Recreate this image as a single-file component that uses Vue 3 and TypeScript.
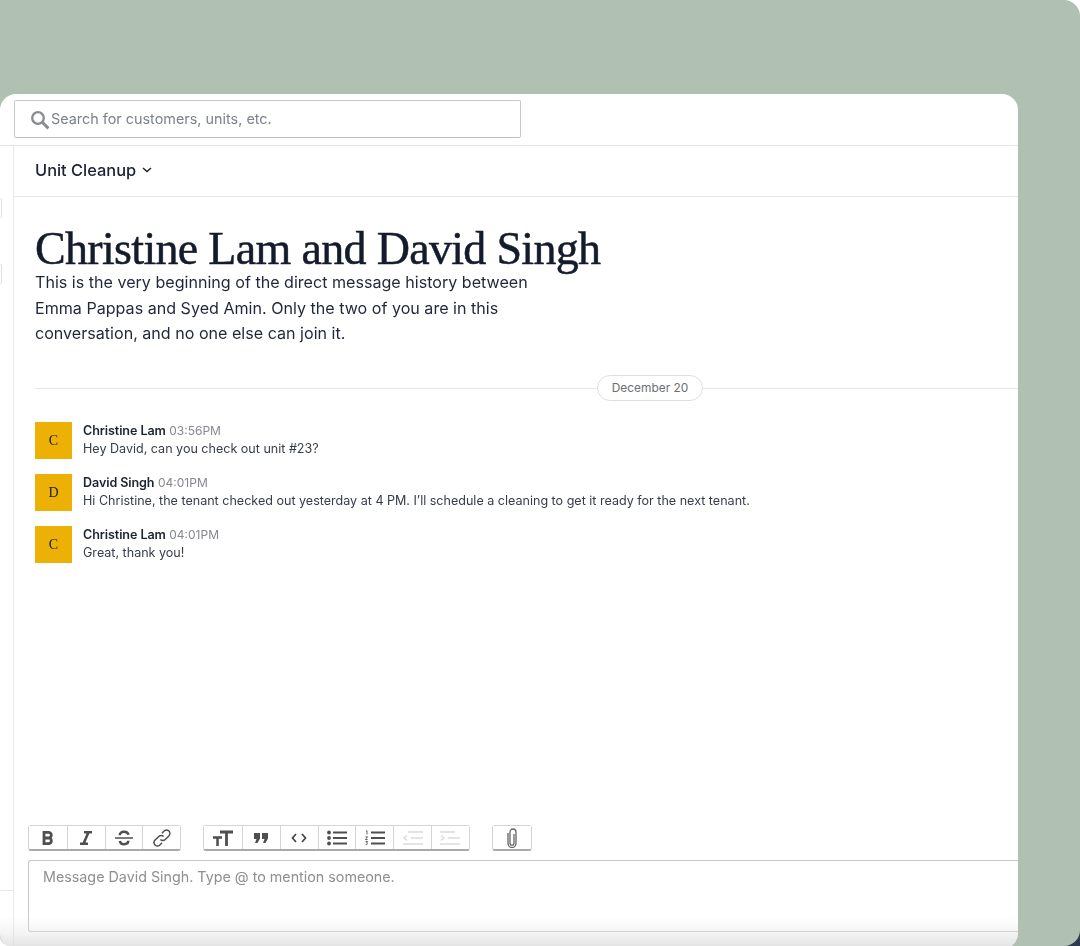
<script setup lang="ts">
interface Msg { initial: string; name: string; time: string; text: string }

const messages: Msg[] = [
  { initial: 'C', name: 'Christine Lam', time: '03:56PM', text: 'Hey David, can you check out unit #23?' },
  { initial: 'D', name: 'David Singh', time: '04:01PM', text: 'Hi Christine, the tenant checked out yesterday at 4 PM. I’ll schedule a cleaning to get it ready for the next tenant.' },
  { initial: 'C', name: 'Christine Lam', time: '04:01PM', text: 'Great, thank you!' },
]
</script>

<template>
  <div class="page">
    <div class="window">
      <div class="search-bar">
        <div class="search-box">
          <svg class="search-icon" width="20" height="20" viewBox="0 0 20 20" fill="none" stroke="#8a8b8e" stroke-width="2.3">
            <circle cx="8" cy="8" r="5.8" />
            <path d="M12.3 12.3 18.4 18.4" stroke-width="3" />
          </svg>
          <span>Search for customers, units, etc.</span>
        </div>
      </div>
      <div class="body">
        <aside class="rail">
          <i class="tick t1"></i>
          <i class="tick t2"></i>
          <i class="rail-line"></i>
        </aside>
        <main class="main">
          <div class="channel">
            <span>Unit Cleanup</span>
            <svg width="10" height="6" viewBox="0 0 10 6" fill="none" stroke="#1a2233" stroke-width="1.4"><path d="M1 1l4 3.6L9 1" /></svg>
          </div>
          <div class="intro">
            <h1>Christine Lam and David Singh</h1>
            <p>This is the very beginning of the direct message history between<br>Emma Pappas and Syed Amin. Only the two of you are in this<br>conversation, and no one else can join it.</p>
          </div>
          <div class="divider"><span>December 20</span></div>
          <div class="messages">
            <div v-for="(m, i) in messages" :key="i" class="msg">
              <div class="avatar">{{ m.initial }}</div>
              <div class="msg-body">
                <div class="meta"><b>{{ m.name }}</b> <span>{{ m.time }}</span></div>
                <div class="text">{{ m.text }}</div>
              </div>
            </div>
          </div>
          <div class="composer">
            <div class="toolbar">
              <div class="group">
                <button><svg width="16" height="16" viewBox="0 0 16 16" fill="none" stroke="#4f4f4f" stroke-width="2.8"><path d="M4 2.400h4.500a2.800 2.800 0 0 1 0 5.600H4zM4 8h5.200a2.900 2.900 0 0 1 0 5.600H4zM4 1v14" /></svg></button>
                <button><svg width="16" height="16" viewBox="0 0 16 16" fill="none" stroke="#4f4f4f" stroke-width="2.600"><path d="M6 2.300h8M2 13.700h8M10.500 2.300 5.500 13.700" /></svg></button>
                <button><svg width="18" height="16" viewBox="0 0 18 16" fill="none" stroke="#4f4f4f"><path d="M0 8h18" stroke-width="1.500" /><path d="M13.500 4.800C13 2.800 11 1.800 9 1.800 6.500 1.800 4.800 3 4.800 5.200M4.800 11C5.200 13.200 7 14.200 9 14.200c2.500 0 4.300-1.200 4.300-3.400" stroke-width="2.500" /></svg></button>
                <button><svg width="20" height="20" viewBox="0 0 18 18" fill="none" stroke="#4f4f4f" stroke-width="1.300"><path d="M7.600 10.400a3 3 0 0 0 4.300 0l3.300-3.300a3 3 0 0 0-4.300-4.300L9 4.700" /><path d="M10.400 7.600a3 3 0 0 0-4.300 0l-3.300 3.300a3 3 0 0 0 4.300 4.300L9 13.300" /></svg></button>
              </div>
              <div class="group">
                <button><svg width="20" height="16" viewBox="0 0 20 16" fill="none" stroke="#4f4f4f"><path d="M7 2h13M13.500 2v14" stroke-width="2.800" /><path d="M0 7.500h9M4.500 7.500V16" stroke-width="2.500" /></svg></button>
                <button><svg width="16" height="12" viewBox="0 0 16 12" fill="#4f4f4f"><path d="M1 1h6v5.500L4.500 11H2l1.500-4H1zM9 1h6v5.500L12.500 11H10l1.500-4H9z" /></svg></button>
                <button><svg width="16" height="10" viewBox="0 0 16 10" fill="none" stroke="#444" stroke-width="1.700"><path d="M5 1 1.500 5 5 9M11 1l3.500 4L11 9" /></svg></button>
                <button><svg width="20" height="16" viewBox="0 0 20 16" fill="#4f4f4f"><circle cx="2" cy="2.500" r="1.900" /><circle cx="2" cy="8" r="1.900" /><circle cx="2" cy="13.500" r="1.900" /><path d="M6 1.500h14v2H6zM6 7h14v2H6zM6 12.500h14v2H6z" /></svg></button>
                <button><svg width="20" height="16" viewBox="0 0 20 16" fill="none" stroke="#4f4f4f"><path d="M6 2.500h14M6 8h14M6 13.500h14" stroke-width="2" /><path d="M1 1.200 2 .8v3.600M.5 6.800h2l-2 2.800h2.200M.6 11.500h2l-1 1.500c1.200 0 1.400 2-1 1.700" stroke-width=".9" /></svg></button>
                <button><svg width="20" height="14" viewBox="0 0 20 14" fill="none" stroke="#dcdcdc" stroke-width="1.500"><path d="M5 1h15M8 7h12M0 13h20M4 4.500 1 7l3 2.500" /></svg></button>
                <button><svg width="20" height="14" viewBox="0 0 20 14" fill="none" stroke="#dcdcdc" stroke-width="1.500"><path d="M0 1h15M0 13h20M8 7h12M1 4.500 4 7 1 9.500" /></svg></button>
              </div>
              <div class="group">
                <button><svg width="12" height="20" viewBox="0 0 12 20" fill="none" stroke="#666" stroke-width="1.300"><path d="M8 6v9.200a2 2 0 0 1-4 0V4a3 3 0 0 1 6 0" /><path d="M10 4v11.500a4 4 0 0 1-8 0V5" /></svg></button>
              </div>
            </div>
            <div class="input">Message David Singh. Type @ to mention someone.</div>
          </div>
          <div class="fade"></div>
        </main>
      </div>
    </div>
    <i class="corner"></i>
  </div>
</template>

<style>
html { background: #fff; }
body { margin: 0; }
</style>

<style scoped>
.page {
  width: 1080px;
  height: 946px;
  box-sizing: border-box;
  padding-top: 94px;
  background: #b0c1b3;
  border-radius: 0 16px 16px 10px;
  overflow: hidden;
  font-family: "Inter", "Liberation Sans", sans-serif;
  color: #1a2233;
}
.corner {
  position: fixed;
  left: 1064px;
  top: 930px;
  width: 16px;
  height: 16px;
  background: #2d3a4f;
  z-index: -1;
}
.window {
  width: 1018px;
  height: 855px;
  background: #fff;
  border-radius: 16px;
  display: flex;
  flex-direction: column;
  overflow: hidden;
}
.search-bar {
  height: 52px;
  flex: none;
  box-sizing: border-box;
  padding: 6px 0 0 14px;
  border-bottom: 1px solid #e6e6e6;
}
.search-box {
  width: 507px;
  height: 38px;
  box-sizing: border-box;
  border: 1px solid #c8c8c8;
  border-bottom-color: #bdbdbd;
  border-radius: 2px;
  display: flex;
  align-items: center;
  padding: 0 0 2px 15px;
  gap: 1px;
  font-size: 14.400px;
  color: #7c818b;
}
.search-icon { flex: none; margin-top: 3px; }
.body { flex: 1; display: flex; min-height: 0; }
.rail {
  width: 13px;
  flex: none;
  border-right: 1px solid #e9e9e9;
  position: relative;
}
.tick {
  position: absolute;
  left: 0;
  width: 1px;
  height: 18px;
  border: 1px solid #e2e2e2;
  border-left: none;
  border-radius: 0 2px 2px 0;
}
.t1 { top: 52px; }
.t2 { top: 118px; }
.rail-line {
  position: absolute;
  left: 0;
  right: 0;
  top: 744px;
  height: 1px;
  background: #e9e9e9;
}
.main {
  flex: 1;
  min-width: 0;
  display: flex;
  flex-direction: column;
  position: relative;
}
.channel {
  height: 51px;
  flex: none;
  box-sizing: border-box;
  border-bottom: 1px solid #e9e9e9;
  padding: 0 0 2px 21px;
  display: flex;
  align-items: center;
  gap: 6px;
  font-size: 16.400px;
  font-weight: 500;
}
.intro { padding: 30px 0 0 21px; }
h1 {
  margin: 0 0 -1px;
  font-family: "Liberation Serif", serif;
  font-weight: 400;
  font-size: 46px;
  line-height: 44px;
  letter-spacing: -0.68px;
  -webkit-text-stroke: 0.5px #141c2c;
  color: #141c2c;
}
.intro p {
  margin: 0;
  font-size: 16.100px;
  line-height: 25.500px;
  color: #1f2738;
}
.divider {
  margin: 28px 0 0 21px;
  height: 26px;
  position: relative;
  display: flex;
  align-items: center;
  justify-content: center;
}
.divider::before {
  content: "";
  position: absolute;
  left: 0;
  right: 0;
  top: 13px;
  height: 1px;
  background: #e6e6e6;
}
.divider span {
  position: relative;
  width: 106px;
  height: 26px;
  margin-left: 247px;
  box-sizing: border-box;
  border: 1px solid #dedede;
  border-radius: 13px;
  background: #fff;
  font-size: 11.900px;
  line-height: 24px;
  text-align: center;
  color: #6c6f75;
}
.messages {
  padding: 21px 0 0 21px;
  display: flex;
  flex-direction: column;
  gap: 15px;
}
.msg { display: flex; gap: 11px; height: 37px; }
.avatar {
  width: 37px;
  height: 37px;
  flex: none;
  background: #edb105;
  font-family: "Liberation Serif", serif;
  font-size: 14px;
  line-height: 37px;
  text-align: center;
  color: #222;
}
.msg-body {
  font-size: 12.550px;
  line-height: 18px;
  color: #363c4a;
}
.meta b { font-weight: 600; letter-spacing: -0.08px; color: #1a2233; }
.meta span { font-size: 12px; color: #85888e; }
.composer {
  margin-top: auto;
  padding: 0 0 17px 14px;
  position: relative;
}
.toolbar { display: flex; gap: 22px; margin-bottom: 9px; }
.group {
  display: flex;
  height: 26px;
  box-sizing: border-box;
  border: 1px solid #d5d5d5;
  border-bottom: 2px solid #a9a9a9;
  border-radius: 3px;
}
.group button {
  width: 37.800px;
  padding: 0;
  border: 0;
  border-left: 1px solid #d5d5d5;
  background: #fff;
  display: flex;
  align-items: center;
  justify-content: center;
}
.group button:first-child { border-left: 0; }
.input {
  height: 72px;
  box-sizing: border-box;
  border: 1px solid #c9c9c9;
  border-right: 0;
  border-radius: 3px 0 0 3px;
  padding: 6px 14px;
  font-size: 14.300px;
  line-height: 20px;
  color: #8f8f8f;
}
.fade {
  position: absolute;
  left: -14px;
  right: 0;
  bottom: 3px;
  height: 42px;
  background: linear-gradient(rgba(222,222,222,0) 30%, rgba(222,222,222,.35) 70%, rgba(222,222,222,.8));
  pointer-events: none;
}
</style>
